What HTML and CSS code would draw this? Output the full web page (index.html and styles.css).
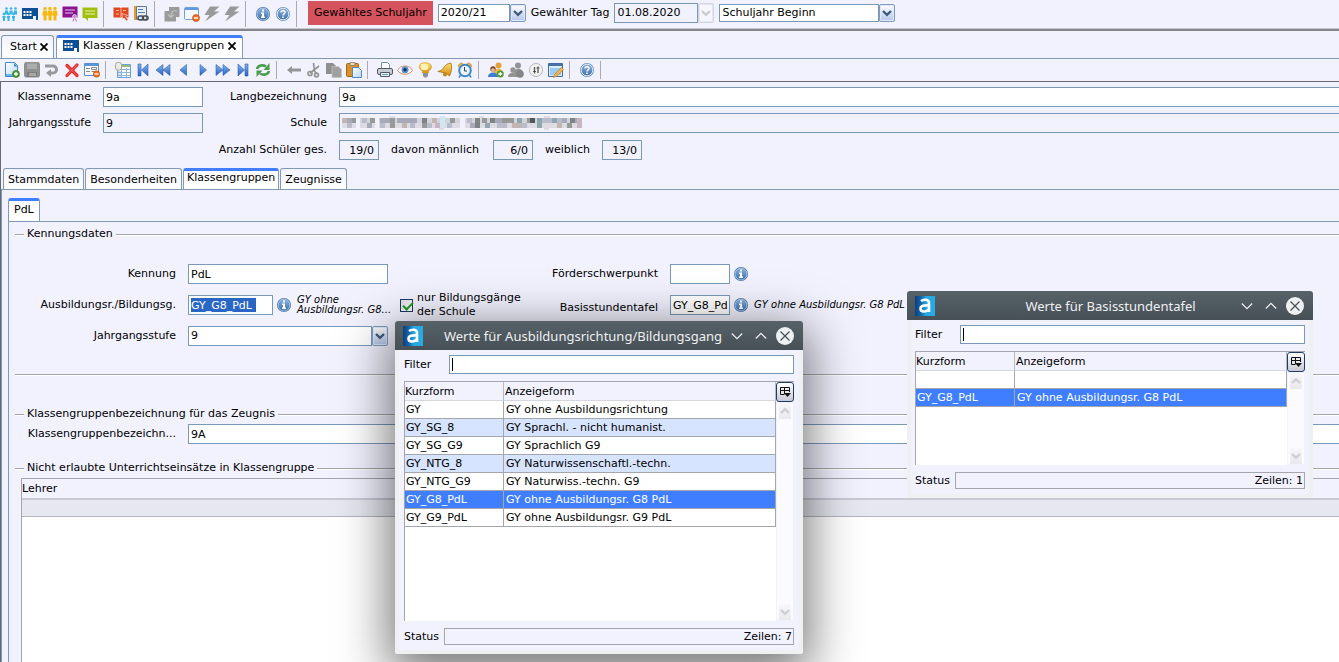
FILE: index.html
```html
<!DOCTYPE html>
<html lang="de">
<head>
<meta charset="utf-8">
<title>Klassen / Klassengruppen</title>
<link rel="stylesheet" href="styles.css">
</head>
<body>
<svg class="defs" aria-hidden="true">
  <defs>
    <linearGradient id="g-blue" x1="0" y1="0" x2="0" y2="1"><stop offset="0" stop-color="#86b4ea"/><stop offset="1" stop-color="#2a62c0"/></linearGradient>
    <linearGradient id="g-round" x1="0" y1="0" x2="0" y2="1"><stop offset="0" stop-color="#8db4de"/><stop offset="1" stop-color="#3c70b0"/></linearGradient>
    <linearGradient id="g-page" x1="0" y1="0" x2="1" y2="1"><stop offset="0" stop-color="#fff"/><stop offset="1" stop-color="#b8d8f8"/></linearGradient>
    <linearGradient id="g-gold" x1="0" y1="0" x2="0" y2="1"><stop offset="0" stop-color="#ffe070"/><stop offset="1" stop-color="#d48a10"/></linearGradient>
    <linearGradient id="g-logo"><stop offset="0" stop-color="#0d3f7c"/><stop offset=".3" stop-color="#1465a8"/><stop offset=".55" stop-color="#27aae4"/><stop offset="1" stop-color="#27aae4"/></linearGradient>
  </defs>
  <symbol id="i-group" viewBox="0 0 16 16"><g fill="#35b6e4"><circle cx="4.500" cy="2.500" r="1.300"/><circle cx="9" cy="2.500" r="1.300"/><circle cx="13.500" cy="2.500" r="1.300"/><path d="M3 4.500h3v4H3zM7.500 4.500h3v4h-3zM12 4.500h3v4h-3z"/><circle cx="2" cy="8" r="1.400"/><circle cx="6.500" cy="8" r="1.400"/><circle cx="11.500" cy="8" r="1.400"/><path d="M.5 10h3v2H3v3H1v-3H.5zM5 10h3v2h-.5v3h-2v-3H5zM10 10h3v2h-.5v3h-2v-3H10z"/></g></symbol>
  <symbol id="i-building" viewBox="0 0 16 16"><path fill="#0b4f96" d="M0 2h16v12h-2v-4h-3v3H0z"/><g fill="#fff"><path d="M1.500 5h2v2h-2zM4.500 5h2v2h-2zM7.500 5h2v2h-2zM1.500 8h2v2h-2zM4.500 8h2v2h-2zM7.500 8h2v2h-2z"/></g></symbol>
  <symbol id="i-people" viewBox="0 0 16 16"><g fill="#f8b80c"><circle cx="3" cy="2.500" r="1.700"/><circle cx="8" cy="2.500" r="1.700"/><circle cx="13" cy="2.500" r="1.700"/><path d="M1 4.500h4l.6 5H4.500v5h-3v-5H.3zM6 4.500h4l.6 5H9.500v5h-3v-5H5.400zM11 4.500h4l.6 5h-1.100v5h-3v-5h-1.100z"/></g></symbol>
  <symbol id="i-board" viewBox="0 0 16 16"><path fill="#8a1390" d="M.5.5h15v11H.5z"/><path stroke="#e8c8ee" d="M3 4h10M3 7h8" fill="none"/><circle cx="12.500" cy="10.500" r="2" fill="#c888d0" stroke="#f2f2ff" stroke-width=".6"/><path stroke="#b868c0" fill="none" d="M11.800 12.500l-.8 3M13.200 12.500l1.500 3"/></symbol>
  <symbol id="i-chat" viewBox="0 0 16 16"><path fill="#a2bf10" d="M.5 1.500h15v10.500H6v3l-3-3H.5z"/><path stroke="#e4f0a8" d="M3 5h10M3 8h10"/></symbol>
  <symbol id="i-redbook" viewBox="0 0 16 16"><path fill="#e04a20" d="M.5 1.500h6.500l1 .7 1-.7h6.500v10H.5z"/><path stroke="#f8b8a0" fill="none" d="M3 4.500h3M3 8h3M10 4.500h3M8 2.500v9"/><path fill="#e04a20" stroke="#f2f2ff" stroke-width=".6" d="M9 7.500l5.500 2-2 1 2.500 3-1.500 1.500-2.500-3-1.500 1.500z"/></symbol>
  <symbol id="i-bookscan" viewBox="0 0 16 16"><path fill="#e6edf6" stroke="#667890" d="M3.500.5h10v13h-10z"/><path fill="#e89a28" d="M1 0h2v14H1z"/><path stroke="#5880b0" d="M5 3.500h5M5 6.500h7"/><g fill="none" stroke="#444b58" stroke-width="1.500"><rect x="5" y="10" width="5.500" height="4" rx="2"/><rect x="9.500" y="10" width="5.500" height="4" rx="2"/></g></symbol>
  <symbol id="i-transfer" viewBox="0 0 16 16"><path fill="#9b9b9b" d="M5 1h10.500v10H12v4.500H.5V5H5z"/><path fill="none" stroke="#c0c0c0" stroke-width="1.200" d="M13 5c-4-1-6 1-6 6M4 8.500l3 3 3-3"/></symbol>
  <symbol id="i-winminus" viewBox="0 0 16 16"><rect x=".5" y="1.500" width="14" height="12" rx="1" fill="#f4f9ff" stroke="#6fa2dc"/><path fill="#5f9ae0" d="M1 2h13v2H1z"/><circle cx="12" cy="12" r="3.500" fill="#f07020" stroke="#b04a10" stroke-width=".6"/><path fill="#fff" d="M10 11.300h4v1.400h-4z"/></symbol>
  <symbol id="i-bolt" viewBox="0 0 16 16"><path fill="#999" d="M6 .5h9.500L10 5.500h5.500L1 15.500l4.500-6.500H.5z"/></symbol>
  <symbol id="i-info" viewBox="0 0 16 16"><circle cx="8" cy="8" r="7" fill="#3c6aa6"/><circle cx="8" cy="8" r="6" fill="url(#g-round)" stroke="#bcd4ee" stroke-width=".8"/><path fill="#fff" d="M7 3.500h2v2H7zM6 6.500h3v4h1v1.500H6v-1.500h1V8H6z"/></symbol>
  <symbol id="i-help" viewBox="0 0 16 16"><circle cx="8" cy="8" r="7" fill="#6b91c2"/><circle cx="8" cy="8" r="5.800" fill="url(#g-round)" stroke="#dce8f6"/><path fill="none" stroke="#fff" stroke-width="1.500" d="M6 6.500c0-2.500 4-2.500 4 0 0 1.300-2 1.300-2 3"/><path fill="#fff" d="M7.200 10.500h1.600V12H7.200z"/></symbol>
  <symbol id="i-new" viewBox="0 0 16 16"><path fill="url(#g-page)" stroke="#3f88d0" d="M1.500.5h9l3 3v11h-12z"/><path fill="#3f88d0" d="M10 1v3.500h3.500z"/><path stroke="#6cb0f0" stroke-width="2" d="M2 13h11"/><circle cx="12" cy="12" r="3.500" fill="#4c9a30" stroke="#2e6d1c" stroke-width=".6"/><path stroke="#fff" stroke-width="1.300" d="M10 12h4M12 10v4"/></symbol>
  <symbol id="i-save" viewBox="0 0 16 16"><path fill="#909090" d="M1.500 0h13L16 1.500V14l-1.500 1.500h-13L0 14V1.500z"/><path fill="#acacac" d="M3 1.500h10v5.500H3z"/><path fill="#7c7c7c" d="M3 10h10v5H3z"/><path fill="#a8a8a8" d="M5 11h7v3H5z"/></symbol>
  <symbol id="i-undo" viewBox="0 0 16 16"><path fill="none" stroke="#999" stroke-width="3" d="M1 4h8a3.500 3.500 0 0 1 0 7H6"/><path fill="#999" d="M7 7v8l-5-4z"/></symbol>
  <symbol id="i-delete" viewBox="0 0 16 16"><path fill="none" stroke="#e02828" stroke-width="3.200" stroke-linecap="round" d="M3 3.500l10 10M13 3l-10 10.500"/><path fill="none" stroke="#ff6e62" stroke-linecap="round" d="M3 3.500l10 10M13 3l-10 10.500"/></symbol>
  <symbol id="i-formminus" viewBox="0 0 16 16"><path fill="#fff" stroke="#5a90d0" d="M.5 1.500h14v12H.5z"/><path fill="#5a94dc" d="M1 2h13v2H1z"/><path fill="#888" d="M2 6h4v1H2zM2 9h4v1H2z"/><path fill="none" stroke="#888" d="M7.500 5.500h5v2h-5zM7.500 9.500h3"/><circle cx="12.500" cy="12" r="3.200" fill="#f07020" stroke="#b04a10" stroke-width=".6"/><path fill="#fff" d="M10.500 11.400h4v1.200h-4z"/></symbol>
  <symbol id="i-table" viewBox="0 0 16 16"><path fill="#fff" stroke="#6f9fd4" d="M2.500 2.500h13v13h-13z"/><path fill="#8fc07c" d="M7 3h8v2H7z"/><path fill="#cfe0f4" d="M3 9h3v6H3z"/><path fill="none" stroke="#8cb4dc" d="M3 7.500h12M3 10.500h12M3 13.500h12M6.500 6v9M11.500 6v9"/><rect x=".5" y=".5" width="6" height="7.500" rx="2" fill="#ecebe4" stroke="#a8a8a0"/></symbol>
  <symbol id="i-first" viewBox="0 0 16 16"><path fill="url(#g-blue)" stroke="#2a5eb4" stroke-width=".6" d="M3 2h3v12H3zM13 2v12L6.500 8z"/></symbol>
  <symbol id="i-rew" viewBox="0 0 16 16"><path fill="url(#g-blue)" stroke="#2a5eb4" stroke-width=".6" d="M8 2.500v11L1 8zM15 2.500v11L8 8z"/></symbol>
  <symbol id="i-prev" viewBox="0 0 16 16"><path fill="url(#g-blue)" stroke="#2a5eb4" stroke-width=".6" d="M11.500 2.500v11L5 8z"/></symbol>
  <symbol id="i-next" viewBox="0 0 16 16"><path fill="url(#g-blue)" stroke="#2a5eb4" stroke-width=".6" d="M5 2.500v11L11.500 8z"/></symbol>
  <symbol id="i-fwd" viewBox="0 0 16 16"><path fill="url(#g-blue)" stroke="#2a5eb4" stroke-width=".6" d="M1 2.500v11L8 8zM8 2.500v11L15 8z"/></symbol>
  <symbol id="i-last" viewBox="0 0 16 16"><path fill="url(#g-blue)" stroke="#2a5eb4" stroke-width=".6" d="M3 2v12l6.500-6zM10 2h3v12h-3z"/></symbol>
  <symbol id="i-refresh" viewBox="0 0 16 16"><g fill="none" stroke="#4b9c4f" stroke-width="2.600"><path d="M2 7c1-4 6-4.500 9-2.500"/><path d="M14 9c-1 4-6 4.500-9 2.500"/></g><path fill="#4b9c4f" d="M14.500 1v7H8.500zM1.500 15V8.500h6z"/></symbol>
  <symbol id="i-left" viewBox="0 0 16 16"><path fill="#949494" d="M1 8l5-4v2.500h9v3H6V12z"/></symbol>
  <symbol id="i-cut" viewBox="0 0 16 16"><g fill="none" stroke="#949494" stroke-width="1.700"><path d="M7.500 1l1 8 2 3M13 4l-9 7"/><circle cx="4" cy="11.500" r="2"/><circle cx="10.500" cy="13" r="1.900"/></g></symbol>
  <symbol id="i-copy" viewBox="0 0 16 16"><path fill="#8f8f8f" d="M0 1h7l3 3v8H0z"/><path fill="#a0a0a0" stroke="#c4c4c4" stroke-width=".7" d="M6 4.500h6.500l3 3v8H6z"/></symbol>
  <symbol id="i-paste" viewBox="0 0 16 16"><rect x=".5" y="1.500" width="12" height="13" rx="1" fill="#d99130" stroke="#a5660f"/><path fill="#ded8ca" stroke="#86754e" stroke-width=".7" d="M4 .5h5v3H4z"/><path fill="url(#g-page)" stroke="#4d88c8" d="M6.500 5.500h6l3 3v7h-9z"/></symbol>
  <symbol id="i-print" viewBox="0 0 16 16"><path fill="#fff" stroke="#6e8fb6" d="M4.500 7V.5h6l2 2V7"/><rect x=".5" y="6.500" width="15" height="6" rx="1.500" fill="#c9ccd2" stroke="#55585f"/><path fill="#e8f3ff" stroke="#55585f" d="M3.500 10.500h9v4h-9z"/><path fill="#5fa0e0" d="M5 12h6v1H5z"/></symbol>
  <symbol id="i-eye" viewBox="0 0 16 16"><path fill="#fff" stroke="#d2925f" d="M.5 8.500C3 2.500 13 2.500 15.500 8.500 12 13.500 4 13.500.5 8.500z"/><circle cx="8" cy="7.800" r="3.500" fill="#5d8fd4"/><circle cx="8" cy="7.800" r="1.700" fill="#1b2e58"/></symbol>
  <symbol id="i-bulb" viewBox="0 0 16 16"><path fill="url(#g-gold)" stroke="#dba11e" stroke-width=".7" d="M8 .7c8 0 8 6 3.500 8.300V11h-6V9C.5 6.500 1 .7 8 .7z"/><ellipse cx="7.500" cy="5" rx="4" ry="3.200" fill="#fff4b8"/><path fill="#8a92a0" d="M6 11h5v3l-1.500 1.500h-2L6 14z"/></symbol>
  <symbol id="i-bell" viewBox="0 0 16 16"><path fill="url(#g-gold)" stroke="#a9700e" stroke-width=".8" d="M14 1c1 4 1 8-1.500 13L9 11 .8 9.500C5 8.500 6 7 7.500 4.500 9 2.500 11 1.500 14 1z"/><circle cx="8" cy="12.500" r="2" fill="#c98514"/></symbol>
  <symbol id="i-alarm" viewBox="0 0 16 16"><path fill="#eab53f" stroke="#b37c18" stroke-width=".6" d="M1 3.500L4 .8l3 1.700L2.500 6zM15 3.500L12 .8 9 2.500 13.500 6z"/><circle cx="8" cy="8.500" r="5.800" fill="#e8f4ff" stroke="#3f86cc" stroke-width="2"/><path fill="none" stroke="#345" d="M7.500 5v4H10"/><path stroke="#3f86cc" stroke-width="1.500" d="M3.500 13L2 15.500M12.500 13l1.500 2.500"/></symbol>
  <symbol id="i-useradd" viewBox="0 0 16 16"><circle cx="10.500" cy="3.500" r="3" fill="#e5a23c"/><path fill="#f0b548" d="M6 12c0-7 9-7 9 0z"/><circle cx="5" cy="7" r="2.700" fill="#7a4a2a"/><circle cx="5" cy="8" r="1.800" fill="#f0c29c"/><path fill="#3f7fd0" d="M0 15c0-6 10-6 10 0z"/><circle cx="12.300" cy="12" r="3.500" fill="#4c9a30"/><path stroke="#fff" stroke-width="1.300" d="M10.300 12h4M12.300 10v4"/></symbol>
  <symbol id="i-usergray" viewBox="0 0 16 16"><g fill="#949494"><circle cx="10" cy="3.500" r="3"/><path d="M6 12c0-7 9-7 9 0z"/><circle cx="5" cy="8" r="2.700"/><path d="M0 15c0-6 10-6 10 0z"/><circle cx="12" cy="12" r="3.800" fill="#858585"/></g></symbol>
  <symbol id="i-sliders" viewBox="0 0 16 16"><circle cx="8" cy="8" r="6.500" fill="#f4f4f4" stroke="#b4b4b4"/><path stroke="#555" stroke-width="1.300" d="M6.500 5v6.500M10 4.500v6.500"/><path stroke="#555" stroke-width="1.200" d="M5 9.500h3M8.500 6h3"/></symbol>
  <symbol id="i-edit" viewBox="0 0 16 16"><path fill="#d8ecff" stroke="#3d6da6" d="M.5 1.500h14v13H.5z"/><path fill="#48719f" d="M1 2h13v2H1z"/><path fill="#9ccaf4" d="M2 6h11v7H2z"/><path fill="#f2b548" stroke="#b5761c" stroke-width=".6" d="M13.500 5.500l2 2-7 7-3 1 1-3z"/></symbol>
  <symbol id="i-x" viewBox="0 0 8 8"><path fill="none" stroke="#000" stroke-width="1.800" d="M.5.500l7 7M7.500.500l-7 7"/></symbol>
  <symbol id="i-arrow" viewBox="0 0 10 10"><path fill="none" stroke="currentColor" stroke-width="2.400" d="M1 3l4 3.800L9 3"/></symbol>
  <symbol id="i-logo" viewBox="0 0 20 20"><path fill="url(#g-logo)" d="M0 0h20v20H0z"/><path fill="none" stroke="#fff" stroke-width="2.600" d="M6 5c2.500-1.800 8-2.200 8 2v9M14 9.500c-5-.5-8.500.3-8.500 3.200 0 3.600 6 3.800 8.500.3"/></symbol>
  <symbol id="i-down" viewBox="0 0 12 12"><path fill="none" stroke="#eff0f1" stroke-width="1.200" d="M.8 3.500L6 8.700l5.200-5.200"/></symbol>
  <symbol id="i-up" viewBox="0 0 12 12"><path fill="none" stroke="#eff0f1" stroke-width="1.200" d="M.8 8.500L6 3.300l5.200 5.200"/></symbol>
  <symbol id="i-close" viewBox="0 0 18 18"><circle cx="9" cy="9" r="9" fill="#eff0f1"/><path fill="none" stroke="#4a5258" stroke-width="1.300" d="M4.500 4.500l9 9M13.500 4.500l-9 9"/></symbol>
  <symbol id="i-cols" viewBox="0 0 12 12"><path fill="none" stroke="#111" d="M10.500 6V1.500h-9v7H5M1 4.500h10M5.500 1v7.500"/><path fill="#111" d="M5 7h7l-3.500 4z"/></symbol>
</svg>

<header class="topbar">
  <div class="tools">
    <button class="tool" aria-label="Schüler"><svg><use href="#i-group"/></svg></button>
    <button class="tool" aria-label="Klassen"><svg><use href="#i-building"/></svg></button>
    <button class="tool" aria-label="Lehrer"><svg><use href="#i-people"/></svg></button>
    <button class="tool" aria-label="Unterricht"><svg><use href="#i-board"/></svg></button>
    <button class="tool" aria-label="Mitteilungen"><svg><use href="#i-chat"/></svg></button>
    <span class="sep"></span>
    <button class="tool" aria-label="Berichte"><svg><use href="#i-redbook"/></svg></button>
    <button class="tool" aria-label="Katalog"><svg><use href="#i-bookscan"/></svg></button>
    <span class="sep"></span>
    <button class="tool" aria-label="Übertragen"><svg><use href="#i-transfer"/></svg></button>
    <button class="tool" aria-label="Fenster schließen"><svg><use href="#i-winminus"/></svg></button>
    <button class="tool" aria-label="Verbinden"><svg><use href="#i-bolt"/></svg></button>
    <button class="tool" aria-label="Trennen"><svg><use href="#i-bolt"/></svg></button>
    <span class="sep"></span>
    <button class="tool" aria-label="Info"><svg><use href="#i-info"/></svg></button>
    <button class="tool" aria-label="Hilfe"><svg><use href="#i-help"/></svg></button>
    <span class="sep"></span>
  </div>
  <div class="period">
    <label class="alert" for="year">Gewähltes Schuljahr</label>
    <div class="combo combo-year"><select id="year"><option>2020/21</option></select><span class="drop"><svg><use href="#i-arrow"/></svg></span></div>
    <label for="day">Gewählter Tag</label>
    <div class="combo combo-day off"><select id="day"><option>01.08.2020</option></select><span class="drop"><svg><use href="#i-arrow"/></svg></span></div>
    <div class="combo combo-start"><select aria-label="Stichtag"><option>Schuljahr Beginn</option></select><span class="drop"><svg><use href="#i-arrow"/></svg></span></div>
  </div>
</header>

<nav class="doctabs">
  <button class="doctab">Start<svg class="x"><use href="#i-x"/></svg></button>
  <button class="doctab current"><svg class="ico"><use href="#i-building"/></svg>Klassen / Klassengruppen<svg class="x"><use href="#i-x"/></svg></button>
</nav>

<div class="toolbar tools">
  <button class="tool" aria-label="Neu"><svg><use href="#i-new"/></svg></button>
  <button class="tool" aria-label="Speichern"><svg><use href="#i-save"/></svg></button>
  <button class="tool" aria-label="Rückgängig"><svg><use href="#i-undo"/></svg></button>
  <button class="tool" aria-label="Löschen"><svg><use href="#i-delete"/></svg></button>
  <button class="tool" aria-label="Formular schließen"><svg><use href="#i-formminus"/></svg></button>
  <span class="sep"></span>
  <button class="tool" aria-label="Liste"><svg><use href="#i-table"/></svg></button>
  <button class="tool" aria-label="Erster"><svg><use href="#i-first"/></svg></button>
  <button class="tool" aria-label="Schnell zurück"><svg><use href="#i-rew"/></svg></button>
  <button class="tool" aria-label="Zurück"><svg><use href="#i-prev"/></svg></button>
  <button class="tool" aria-label="Weiter"><svg><use href="#i-next"/></svg></button>
  <button class="tool" aria-label="Schnell vor"><svg><use href="#i-fwd"/></svg></button>
  <button class="tool" aria-label="Letzter"><svg><use href="#i-last"/></svg></button>
  <button class="tool" aria-label="Aktualisieren"><svg><use href="#i-refresh"/></svg></button>
  <span class="sep"></span>
  <button class="tool" aria-label="Voriges"><svg><use href="#i-left"/></svg></button>
  <button class="tool" aria-label="Ausschneiden"><svg><use href="#i-cut"/></svg></button>
  <button class="tool" aria-label="Kopieren"><svg><use href="#i-copy"/></svg></button>
  <button class="tool" aria-label="Einfügen"><svg><use href="#i-paste"/></svg></button>
  <span class="sep"></span>
  <button class="tool" aria-label="Drucken"><svg><use href="#i-print"/></svg></button>
  <button class="tool" aria-label="Vorschau"><svg><use href="#i-eye"/></svg></button>
  <button class="tool" aria-label="Hinweis"><svg><use href="#i-bulb"/></svg></button>
  <button class="tool" aria-label="Benachrichtigung"><svg><use href="#i-bell"/></svg></button>
  <button class="tool" aria-label="Wiedervorlage"><svg><use href="#i-alarm"/></svg></button>
  <span class="sep"></span>
  <button class="tool" aria-label="Schüler hinzufügen"><svg><use href="#i-useradd"/></svg></button>
  <button class="tool" aria-label="Schüler entfernen"><svg><use href="#i-usergray"/></svg></button>
  <button class="tool" aria-label="Einstellungen"><svg><use href="#i-sliders"/></svg></button>
  <button class="tool" aria-label="Bearbeiten"><svg><use href="#i-edit"/></svg></button>
  <span class="sep"></span>
  <button class="tool" aria-label="Hilfe zur Seite"><svg><use href="#i-help"/></svg></button>
  <span class="sep"></span>
</div>

<main class="doc">
  <section class="head">
    <label for="name">Klassenname</label>
    <input id="name" class="field" value="9a">
    <label for="long">Langbezeichnung</label>
    <input id="long" class="field open" value="9a">
    <label for="grade">Jahrgangsstufe</label>
    <input id="grade" class="field ro" value="9" readonly>
    <span class="label">Schule</span>
    <div class="field ro open">
      <svg class="masked" viewBox="0 0 240 14" shape-rendering="crispEdges" role="img" aria-label="Unkenntlich">
        <g stroke-width="5" fill="none">
          <path stroke="#d3d4db" d="M0 4.500h240"/>
          <path stroke="#dcdce2" d="M0 9.500h240M47 1.500h6M137 1.500h5M202 1.500h6M202 12.500h5M97 12.500h5"/>
          <path stroke="#c2b6b2" d="M0 4.500h5M60 9.500h5M90 4.500h5M170 9.500h10M215 9.500h5"/>
          <path stroke="#a8aab8" d="M5 4.500h5M25 9.500h5M38 4.500h10M55 4.500h20M128 9.500h10M150 4.500h10M220 4.500h5M232 4.500h5"/>
          <path stroke="#989a9a" d="M10 4.500h5M28 4.500h5M48 4.500h5M48 9.500h5M80 9.500h5M108 4.500h5M140 4.500h5M160 4.500h12M185 4.500h5M225 9.500h5"/>
          <path stroke="#7e8486" d="M80 4.500h5M133 4.500h5M148 4.500h5M133 9.500h5M228 4.500h5"/>
          <path stroke="#8fa6ae" d="M143 9.500h5M175 4.500h5M195 4.500h5M195 9.500h5M210 4.500h5"/>
          <path stroke="#b8bccb" d="M5 9.500h5M20 4.500h5M38 9.500h5M68 9.500h5M85 9.500h5M105 9.500h5M125 4.500h5M155 9.500h10M180 9.500h5M200 4.500h10M215 4.500h5"/>
          <path stroke="#cfe8f2" d="M98 1.500h5M98 4.500h5M98 9.500h5"/>
          <path stroke="#f2f2ff" d="M14 4.500h4M14 9.500h4M33 4.500h4M33 9.500h4M118 4.500h5M118 9.500h5"/>
          <path stroke="#4f595b" d="M188 4.500h5"/>
          <path stroke="#c8b4c4" d="M93 9.500h5M235 4.500h5M235 9.500h5"/>
        </g>
      </svg>
    </div>
    <label class="sum" for="total">Anzahl Schüler ges.</label>
    <div class="counts">
      <input id="total" class="field num ro" value="19/0" readonly>
      <label for="male">davon männlich</label>
      <input id="male" class="field num ro" value="6/0" readonly>
      <label for="female">weiblich</label>
      <input id="female" class="field num ro" value="13/0" readonly>
    </div>
  </section>

  <nav class="subtabs">
    <button class="subtab">Stammdaten</button>
    <button class="subtab">Besonderheiten</button>
    <button class="subtab current">Klassengruppen</button>
    <button class="subtab">Zeugnisse</button>
  </nav>

  <section class="panel">
    <nav class="grouptabs"><button class="grouptab">PdL</button></nav>
    <div class="group">
      <section class="set ident">
        <h3 class="legend">Kennungsdaten</h3>
        <div class="grid">
          <label for="code">Kennung</label>
          <input id="code" class="field" value="PdL">
          <span></span>
          <label for="focus">Förderschwerpunkt</label>
          <div class="withinfo"><input id="focus" class="field short"><svg class="info"><use href="#i-info"/></svg></div>

          <label for="course">Ausbildungsr./Bildungsg.</label>
          <div class="withinfo"><input id="course" class="field mid marked" value="GY_G8_PdL"><svg class="info"><use href="#i-info"/></svg><em class="note">GY ohne<br>Ausbildungsr. G8...</em></div>
          <label class="check"><input type="checkbox" checked><span>nur Bildungsgänge<br>der Schule</span></label>
          <label class="low" for="base">Basisstundentafel</label>
          <div class="withinfo"><input id="base" class="field short" value="GY_G8_PdL"><svg class="info"><use href="#i-info"/></svg><em class="note">GY ohne Ausbildungsr. G8 PdL</em></div>

          <label for="level">Jahrgangsstufe</label>
          <div class="combo"><select id="level"><option>9</option></select><span class="drop"><svg><use href="#i-arrow"/></svg></span></div>
        </div>
      </section>

      <section class="set naming">
        <h3 class="legend">Klassengruppenbezeichnung für das Zeugnis</h3>
        <div class="grid wide">
          <label for="title">Klassengruppenbezeichn...</label>
          <input id="title" class="field open" value="9A">
        </div>
      </section>

      <section class="set teachers">
        <h3 class="legend">Nicht erlaubte Unterrichtseinsätze in Klassengruppe</h3>
        <div class="tablebox">
          <table class="list">
            <thead><tr><th>Lehrer</th></tr></thead>
            <tbody><tr><td></td></tr></tbody>
          </table>
        </div>
      </section>
    </div>
  </section>
</main>

<section class="dialog first" role="dialog" aria-labelledby="t1">
  <header class="title">
    <svg class="logo"><use href="#i-logo"/></svg>
    <h2 id="t1">Werte für Ausbildungsrichtung/Bildungsgang</h2>
    <button aria-label="Minimieren"><svg class="win"><use href="#i-down"/></svg></button>
    <button aria-label="Maximieren"><svg class="win"><use href="#i-up"/></svg></button>
    <button aria-label="Schließen"><svg class="close"><use href="#i-close"/></svg></button>
  </header>
  <div class="content">
    <div class="filter"><label for="f1">Filter</label><input id="f1" class="field caret"></div>
    <div class="values">
      <div class="rows">
        <table>
          <thead><tr><th class="k">Kurzform</th><th>Anzeigeform</th></tr></thead>
          <tbody>
            <tr><td>GY</td><td>GY ohne Ausbildungsrichtung</td></tr>
            <tr class="alt"><td>GY_SG_8</td><td>GY Sprachl. - nicht humanist.</td></tr>
            <tr><td>GY_SG_G9</td><td>GY Sprachlich G9</td></tr>
            <tr class="alt"><td>GY_NTG_8</td><td>GY Naturwissenschaftl.-techn.</td></tr>
            <tr><td>GY_NTG_G9</td><td>GY Naturwiss.-techn. G9</td></tr>
            <tr class="sel"><td>GY_G8_PdL</td><td>GY ohne Ausbildungsr. G8 PdL</td></tr>
            <tr><td>GY_G9_PdL</td><td>GY ohne Ausbildungsr. G9 PdL</td></tr>
          </tbody>
        </table>
      </div>
      <div class="side">
        <button class="cols" aria-label="Spalten"><svg><use href="#i-cols"/></svg></button>
        <div class="track"><span class="step up"><svg><use href="#i-arrow"/></svg></span><span class="step"><svg><use href="#i-arrow"/></svg></span></div>
      </div>
    </div>
    <div class="status"><span>Status</span><output>Zeilen: 7</output></div>
  </div>
</section>

<section class="dialog second" role="dialog" aria-labelledby="t2">
  <header class="title">
    <svg class="logo"><use href="#i-logo"/></svg>
    <h2 id="t2">Werte für Basisstundentafel</h2>
    <button aria-label="Minimieren"><svg class="win"><use href="#i-down"/></svg></button>
    <button aria-label="Maximieren"><svg class="win"><use href="#i-up"/></svg></button>
    <button aria-label="Schließen"><svg class="close"><use href="#i-close"/></svg></button>
  </header>
  <div class="content">
    <div class="filter"><label for="f2">Filter</label><input id="f2" class="field caret"></div>
    <div class="values">
      <div class="rows">
        <table>
          <thead><tr><th class="k">Kurzform</th><th>Anzeigeform</th></tr></thead>
          <tbody>
            <tr><td></td><td></td></tr>
            <tr class="sel"><td>GY_G8_PdL</td><td>GY ohne Ausbildungsr. G8 PdL</td></tr>
          </tbody>
        </table>
      </div>
      <div class="side">
        <button class="cols" aria-label="Spalten"><svg><use href="#i-cols"/></svg></button>
        <div class="track"><span class="step up"><svg><use href="#i-arrow"/></svg></span><span class="step"><svg><use href="#i-arrow"/></svg></span></div>
      </div>
    </div>
    <div class="status"><span>Status</span><output>Zeilen: 1</output></div>
  </div>
</section>
</body>
</html>
```

FILE: styles.css
```css
:root {
  --bg: #f2f2ff;
  --line: #7a99b8;
  --tab: #8299b5;
  --gray: #a5a5ad;
  --blue: #3f7fff;
}

* { box-sizing: border-box; }

body {
  display: flex;
  flex-direction: column;
  min-height: 100vh;
  margin: 0;
  overflow: hidden;
  background: var(--bg);
  color: #000;
  font: 11px/14px "DejaVu Sans", sans-serif;
}

button, input, select { font: inherit; color: inherit; margin: 0; }
button { padding: 0; border: 0; background: none; }
label, .label { white-space: nowrap; }
.defs { position: absolute; width: 0; height: 0; }

.tools { display: flex; align-items: center; }
.tool { display: flex; justify-content: center; width: 20px; }
.tool svg { width: 16px; height: 16px; }
.sep { width: 1px; height: 18px; margin: 0 7px 0 3px; background: #aaaab0; }

.topbar {
  display: flex;
  height: 31px;
  padding-bottom: 2px;
  border-bottom: 2px solid #85858a;
  box-shadow: inset 0 -1px #c8c8d0;
}
.topbar .sep { height: 26px; }
.period { display: flex; align-items: center; gap: 5px; padding: 0 0 1px 4px; }
.alert { padding: 5px 6px; background: #d5535c; }

.combo { display: flex; height: 20px; }
.combo select {
  flex: 1;
  min-width: 0;
  padding: 0 2px;
  appearance: none;
  border: 1px solid var(--line);
  border-radius: 0;
  background: #fff;
}
.drop {
  display: flex;
  align-items: center;
  justify-content: center;
  width: 16px;
  border: 1px solid #7f9cc0;
  border-radius: 2px;
  background: linear-gradient(#fff, #b4c6ea);
  box-shadow: inset 0 0 0 1px #dfe8f8;
  color: #3f5a80;
}
.drop svg { width: 10px; height: 10px; }
.topbar .combo { height: 18px; }
.combo-year { width: 88px; }
.combo-day { width: 100px; }
.combo-start { width: 176px; }
.topbar .combo-day { height: 20px; }
.off select { background: var(--bg); }
.off .drop { border-color: #d4d4dc; background: #f6f6fc; color: #cbcbd2; }

.doctabs { display: flex; align-items: flex-end; gap: 2px; padding: 4px 1px 0; border-bottom: 1px solid var(--tab); }
.doctab {
  display: flex;
  align-items: center;
  gap: 3px;
  height: 23px;
  padding: 0 5px 0 8px;
  border: 1px solid var(--tab);
  border-bottom: 0;
  border-radius: 3px 3px 0 0;
  background: linear-gradient(#f2f2ff, #fff);
}
.doctab .x { width: 8px; height: 8px; }
.doctab .ico { width: 16px; height: 16px; }
.doctab.current { gap: 4px; padding: 0 6px 4px; border-top: 3px solid var(--blue); background: #fff; }

.toolbar { height: 22px; padding-left: 2px; }

.doc { display: flex; flex: 1; flex-direction: column; border: solid #686870; border-width: 1px 0 0 1px; }

.head {
  display: grid;
  grid-template-columns: 90px 100px 112px 1fr;
  gap: 6px 12px;
  align-items: center;
  padding-top: 5px;
}
.head label, .head .label { text-align: right; }
.head .sum { grid-column: 1 / 4; }
.field {
  display: block;
  width: 100%;
  min-width: 0;
  height: 20px;
  padding: 0 2px;
  border: 1px solid var(--line);
  border-radius: 0;
  background: #fff;
  outline: 0;
}
.field.ro { background: var(--bg); }
.field.open { border-right: 0; }
.field.num { width: 40px; text-align: right; padding-right: 4px; }
.masked { display: block; width: 240px; height: 14px; margin-top: 2px; }
.counts { display: flex; align-items: center; gap: 12px; padding-top: 1px; }
.counts label { width: 90px; text-align: left; }
.counts label:last-of-type { width: 45px; }

.subtabs { display: flex; gap: 1px; margin-top: 8px; padding-left: 2px; }
.subtab {
  height: 21px;
  padding: 1px 4px 0;
  border: 1px solid var(--tab);
  border-bottom: 0;
  border-radius: 3px 3px 0 0;
  background: linear-gradient(#f2f2ff, #fff);
}
.subtab.current { padding: 0 3px 4px; border-top: 3px solid var(--blue); background: #fff; }

.panel { display: flex; flex: 1; flex-direction: column; padding: 8px 0 0 6px; border: solid var(--tab); border-width: 1px 0 0 1px; }
.grouptabs { display: flex; }
.grouptab {
  height: 24px;
  margin-bottom: -1px;
  padding: 0 5px 4px;
  border: 1px solid var(--tab);
  border-top: 3px solid var(--blue);
  border-bottom: 0;
  border-radius: 3px 3px 0 0;
  background: #fff;
}
.group { display: flex; flex: 1; flex-direction: column; padding: 5px 0 0 6px; border: solid var(--tab); border-width: 1px 0 0 1px; }

.legend { display: flex; align-items: center; gap: 3px; margin: 0; font: inherit; white-space: nowrap; }
.legend::before, .legend::after { content: ""; width: 9px; height: 1px; background: var(--gray); box-shadow: 0 1px #fff; }
.legend::after { flex: 1; }
.ident { padding-bottom: 28px; border-bottom: 1px solid var(--gray); box-shadow: 0 1px #fff; }
.grid {
  display: grid;
  grid-template-columns: 161px 200px 123px 123px 1fr;
  grid-auto-rows: 20px;
  gap: 11px 12px;
  align-items: center;
  padding-top: 23px;
}
.grid > label { text-align: right; }
.grid > .low { align-self: end; }
.grid.wide { grid-template-columns: 161px 1fr; padding-top: 3px; }
.withinfo { display: flex; align-items: center; gap: 3px; }
.info { flex: none; width: 16px; height: 16px; }
.mid { width: 85px; }
.short { width: 60px; }
.marked { background: linear-gradient(#2a66c4, #2a66c4) 2px 2px / 65px 14px no-repeat #fff; color: #fff; }
.note { padding-left: 2px; font-size: 10px; line-height: 10px; white-space: nowrap; }
.withinfo .mid { flex: none; }
.grid > .check { display: flex; align-items: center; gap: 4px; text-align: left; }
.check input {
  width: 13px;
  height: 13px;
  appearance: none;
  border: 1px solid #1c3c6c;
  background: linear-gradient(135deg, #dcdce4, #fff);
}
.check input:checked::before {
  content: "";
  display: block;
  width: 8px;
  height: 4px;
  margin: 2px 0 0 2px;
  border: solid #1d9a1d;
  border-width: 0 0 2px 2px;
  transform: rotate(-45deg);
}
.naming { margin-top: 32px; }
.teachers { display: flex; flex: 1; flex-direction: column; margin-top: 17px; }
.tablebox { flex: 1; margin: 3px 0 0 6px; border: solid var(--gray); border-width: 1px 0 0 1px; background: #fff; }
.list { width: 100%; border-collapse: separate; border-spacing: 0; }
.list th { height: 21px; padding: 0; border-bottom: 2px solid #cacad4; background: var(--bg); font-weight: normal; text-align: left; }
.list td { height: 17px; padding: 0; border-bottom: 1px solid #b4b4bc; background: #e7e7f1; }

.dialog {
  position: absolute;
  display: flex;
  flex-direction: column;
  border-radius: 3px 3px 2px 2px;
  background: #eff0f1;
}
.first { top: 321px; left: 395px; width: 408px; box-shadow: 0 14px 50px 6px rgba(0, 0, 0, .55); }
.second { top: 291px; left: 907px; width: 406px; }
.title {
  display: flex;
  align-items: center;
  gap: 6px;
  height: 29px;
  padding: 0 9px 0 8px;
  border-radius: 3px 3px 0 0;
  background: linear-gradient(#566168, #475057);
  color: #eff0f1;
}
.title h2 { flex: 1; margin: 0; font: 13px/18px "Noto Sans", sans-serif; text-align: right; white-space: nowrap; }
.second .title h2 { padding-left: 48px; text-align: center; }
.title button { display: flex; justify-content: center; width: 18px; }
.logo { width: 20px; height: 20px; }
.win { width: 12px; height: 12px; }
.close { width: 18px; height: 18px; }
.content { margin: 0 4px 4px; padding: 5px; background: var(--bg); }
.second .content { padding: 5px 4px; }
.filter { display: grid; grid-template-columns: 45px 1fr; align-items: center; }
.filter .field { height: 19px; }
.caret { background: linear-gradient(#000, #000) 2px 2px / 1px 13px no-repeat #fff; }
.values { display: flex; height: 240px; margin-top: 7px; border: solid var(--gray); border-width: 1px 0 0 1px; background: #fff; }
.second .values { height: 114px; }
.rows { flex: 1; }
.rows table { width: 100%; border-collapse: separate; border-spacing: 0; table-layout: fixed; }
.rows th { height: 19px; padding: 1px 0 0 1px; border-bottom: 1px solid #d6d6e0; border-right: 1px solid #b8b8c0; background: var(--bg); font-weight: normal; text-align: left; }
.rows .k { width: 99px; padding-left: 0; }
.rows td { height: 18px; padding: 0 1px; border: solid var(--gray); border-width: 0 1px 1px 0; white-space: nowrap; }
.rows td + td { padding-left: 2px; }
.alt td { background: #d7e4ff; }
.sel td { background: var(--blue); color: #fff; }
.side { display: flex; flex-direction: column; width: 18px; background: var(--bg); }
.cols {
  display: flex;
  align-items: center;
  justify-content: center;
  height: 20px;
  border: 1px solid #1c3c6c;
  border-radius: 3px;
  background: linear-gradient(#fff, #c8c8d4);
}
.cols svg { width: 12px; height: 12px; }
.track { display: flex; flex: 1; flex-direction: column; justify-content: space-between; align-items: center; margin: 1px; background: #fbfbff; }
.step { display: flex; align-items: center; justify-content: center; width: 12px; height: 16px; background: linear-gradient(#f8f8fa, #e8e8ee); color: #ceced4; }
.step svg { width: 10px; height: 10px; }
.step.up svg { transform: rotate(180deg); }
.status { display: flex; align-items: center; gap: 5px; margin-top: 7px; }
.status output { flex: 1; height: 17px; padding-right: 1px; border: 1px solid var(--gray); text-align: right; line-height: 15px; }
```
